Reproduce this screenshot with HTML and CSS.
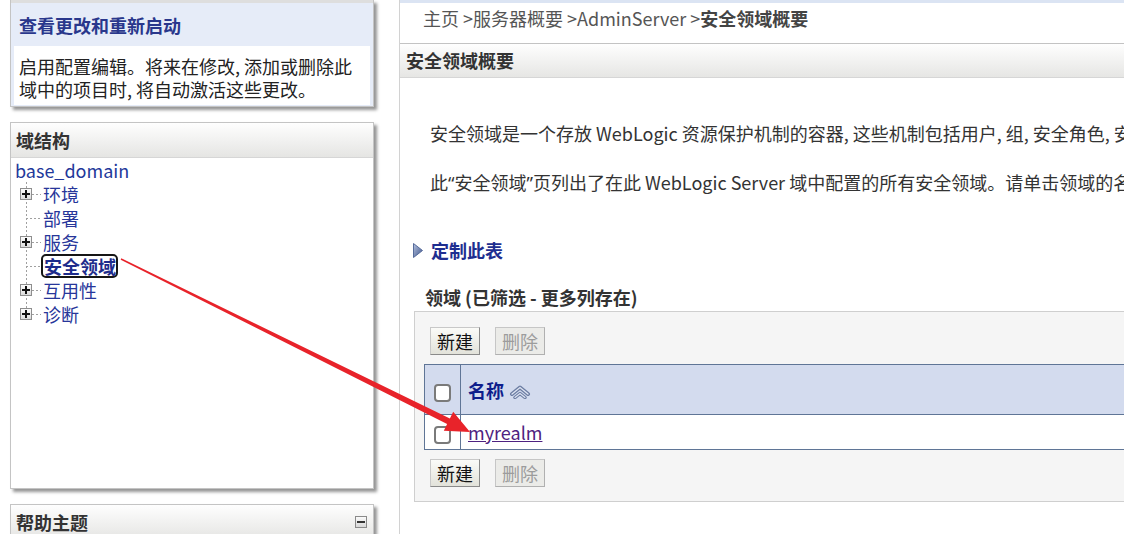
FILE: index.html
```html
<!DOCTYPE html>
<html lang="zh-CN">
<head>
<meta charset="utf-8">
<title>安全领域概要</title>
<link rel="stylesheet" href="styles.css">
</head>
<body>
<div class="page">
  <aside class="sidebar">
    <section class="panel change-center">
      <div class="cc-strip"></div>
      <h2 class="cc-title">查看更改和重新启动</h2>
      <div class="cc-body">启用配置编辑。将来在修改, 添加或删除此<br>域中的项目时, 将自动激活这些更改。</div>
    </section>

    <section class="panel domain-panel">
      <h2 class="panel-head">域结构</h2>
      <div class="tree">
        <div class="tree-root">base_domain</div>
        <ul class="tree-list">
          <li class="tree-row"><span class="gutter"><span class="toggle"></span><span class="dash"></span></span><a class="node">环境</a></li>
          <li class="tree-row"><span class="gutter"><span class="leaf-dash"></span></span><a class="node">部署</a></li>
          <li class="tree-row"><span class="gutter"><span class="toggle"></span><span class="dash"></span></span><a class="node">服务</a></li>
          <li class="tree-row"><span class="gutter"><span class="leaf-dash"></span></span><a class="node selected">安全领域</a></li>
          <li class="tree-row"><span class="gutter"><span class="toggle"></span><span class="dash"></span></span><a class="node">互用性</a></li>
          <li class="tree-row last"><span class="gutter"><span class="toggle"></span><span class="dash"></span></span><a class="node">诊断</a></li>
        </ul>
      </div>
    </section>

    <section class="panel help-panel">
      <h2 class="panel-head help-head"><span>帮助主题</span><span class="minus"></span></h2>
    </section>
  </aside>

  <main class="content">
    <div class="top-strip"></div>
    <nav class="breadcrumb">主页 &gt;服务器概要 &gt;AdminServer &gt;<b>安全领域概要</b></nav>
    <section class="main-panel">
      <h1 class="main-head">安全领域概要</h1>
      <div class="main-body">
        <p class="intro first">安全领域是一个存放 WebLogic 资源保护机制的容器, 这些机制包括用户, 组, 安全角色, 安全策略和安全提供程序。</p>
        <p class="intro">此<span class="q">“</span>安全领域<span class="q">”</span>页列出了在此 WebLogic Server 域中配置的所有安全领域。请单击领域的名称以查看和配置该领域。</p>

        <div class="customize">
          <svg class="tri" width="10" height="15" viewBox="0 0 10 15">
            <defs>
              <linearGradient id="tg" x1="0" y1="0" x2="1" y2="1">
                <stop offset="0" stop-color="#b4c2e0"/>
                <stop offset="1" stop-color="#3f5489"/>
              </linearGradient>
            </defs>
            <polygon points="0.5,0.5 9.5,7.5 0.5,14.5" fill="url(#tg)" stroke="#566b9a" stroke-width="1"/>
          </svg>
          <a class="customize-link">定制此表</a>
        </div>

        <h3 class="table-title">领域 (已筛选 - 更多列存在)</h3>

        <div class="table-box">
          <div class="btn-row">
            <button class="btn">新建</button><button class="btn" disabled>删除</button>
          </div>
          <table class="grid">
            <tr class="head-row">
              <th class="chk-cell"><span class="checkbox"></span></th>
              <th class="name-cell">名称
                <svg class="sort" width="22" height="14" viewBox="0 0 22 14">
                  <polyline points="3,9 11,2.5 19,9" fill="none" stroke="#6d7ea3" stroke-width="4" stroke-linejoin="round" stroke-linecap="round"/>
                  <polyline points="3,9 11,2.5 19,9" fill="none" stroke="#dfe5f3" stroke-width="1.3" stroke-linecap="round"/>
                  <polyline points="6,12.5 11,8.5 16,12.5" fill="none" stroke="#6d7ea3" stroke-width="3.5" stroke-linejoin="round" stroke-linecap="round"/>
                  <polyline points="6,12.5 11,8.5 16,12.5" fill="none" stroke="#dfe5f3" stroke-width="1.2" stroke-linecap="round"/>
                </svg>
              </th>
            </tr>
            <tr class="data-row">
              <td class="chk-cell"><span class="checkbox"></span></td>
              <td class="name-cell"><a class="realm-link">myrealm</a></td>
            </tr>
          </table>
          <div class="btn-row lower">
            <button class="btn">新建</button><button class="btn" disabled>删除</button>
          </div>
        </div>
      </div>
    </section>
  </main>
</div>

<svg class="annotation" width="1124" height="534" viewBox="0 0 1124 534">
  <polygon points="121.3,258.3 449.9,418.6 453.2,411.8 470,432 443.8,430.8 447.1,424.0 120.7,259.7" fill="#e8232a"/>
</svg>
</body>
</html>
```

FILE: styles.css
```css
html, body {
  margin: 0;
  padding: 0;
  overflow: hidden;
  background: #fff;
}

body {
  position: relative;
  width: 1124px;
  height: 534px;
  font-family: "Noto Sans CJK SC", "Noto Sans", sans-serif;
  font-size: 18px;
  color: #222;
}

.page {
  display: flex;
  height: 534px;
}

/* ---------- sidebar ---------- */
.sidebar {
  width: 399px;
  flex: none;
  padding-left: 10px;
  box-sizing: border-box;
}

.panel {
  width: 364px;
  box-sizing: border-box;
  background: #fff;
  border: 1px solid #c4c4c4;
  box-shadow: 3px 3px 3px rgba(0, 0, 0, 0.42);
}

.change-center {
  background: #e6ecf8;
  border-top: none;
}

.cc-strip {
  height: 3px;
  background: #dedede;
}

.cc-title {
  margin: 0;
  height: 43px;
  box-sizing: border-box;
  padding: 2px 0 0 8px;
  line-height: 40px;
  font-size: 18px;
  font-weight: bold;
  color: #29378c;
}

.cc-body {
  background: #fff;
  margin: 0 3px 1px;
  padding: 9px 6px 4px 5px;
  line-height: 23px;
  white-space: nowrap;
  color: #222;
}

.domain-panel {
  margin-top: 15px;
  height: 367px;
}

.panel-head {
  margin: 0;
  height: 35px;
  box-sizing: border-box;
  line-height: 34px;
  padding-left: 5px;
  font-size: 18px;
  font-weight: bold;
  color: #333;
  background: linear-gradient(#fefefe, #e5e5e3);
  border-bottom: 1px solid #d6d6d6;
}

.tree {
  padding: 0 0 0 4px;
}

.tree-root {
  line-height: 24px;
  color: #22389a;
}

.tree-list {
  list-style: none;
  margin: 0;
  padding: 0;
}

.tree-row {
  display: flex;
  align-items: center;
  height: 24px;
  background: linear-gradient(#a0a0a0 50%, transparent 50%) 11px 0 / 1px 4px repeat-y;
}

.tree-row.last {
  background:
    linear-gradient(#fff, #fff) 0 12px / 100% 12px no-repeat,
    linear-gradient(#a0a0a0 50%, transparent 50%) 11px 0 / 1px 4px repeat-y;
}

.gutter {
  display: flex;
  align-items: center;
  width: 28px;
  flex: none;
}

.toggle {
  width: 12px;
  height: 12px;
  margin-left: 5px;
  box-sizing: border-box;
  border: 1px solid #8e8e8e;
  background:
    linear-gradient(#111, #111) center / 8px 2px no-repeat,
    linear-gradient(#111, #111) center / 2px 8px no-repeat,
    linear-gradient(#fdfdfd, #dcdcdc);
}

.dash {
  width: 9px;
  height: 1px;
  background: linear-gradient(to right, #a0a0a0 50%, transparent 50%) 0 0 / 4px 1px repeat-x;
}

.leaf-dash {
  width: 15px;
  height: 1px;
  margin-left: 11px;
  background: linear-gradient(to right, #a0a0a0 50%, transparent 50%) 0 0 / 4px 1px repeat-x;
}

.node {
  color: #27369a;
  text-decoration: none;
  line-height: 24px;
}

.node.selected {
  font-weight: bold;
  color: #1d2c8c;
  border: 2.5px solid #161616;
  border-radius: 5px;
  line-height: 20px;
  margin-left: -2px;
  padding: 0 0 0 1px;
}

.help-panel {
  margin-top: 15px;
  height: 60px;
}

.help-head {
  display: flex;
  justify-content: space-between;
  align-items: center;
  padding-right: 6px;
}

.minus {
  width: 12px;
  height: 12px;
  box-sizing: border-box;
  border: 1px solid #8a8a8a;
  background:
    linear-gradient(#333, #333) center / 8px 2px no-repeat,
    linear-gradient(#fafafa, #d8d8d8);
}

/* ---------- content ---------- */
.content {
  flex: 1;
  min-width: 0;
  border-left: 1px solid #d2d2d2;
  white-space: nowrap;
  overflow: hidden;
}

.top-strip {
  height: 3px;
  background: #dbe4f3;
}

.breadcrumb {
  padding: 3px 0 0 23px;
  line-height: 24px;
  color: #555;
}

.breadcrumb b {
  color: #444;
}

.main-panel {
  margin-top: 13px;
}

.main-head {
  margin: 0;
  height: 35px;
  box-sizing: border-box;
  border-top: 1px solid #c3c3c3;
  border-bottom: 1px solid #d6d6d6;
  line-height: 33px;
  padding-left: 6px;
  font-size: 18px;
  font-weight: bold;
  color: #333;
  background: linear-gradient(#fefefe, #e6e6e4);
}

.main-body {
  padding-left: 13px;
}

.intro {
  margin: 25px 0 0;
  padding-left: 17px;
  line-height: 24px;
  color: #333;
}

.intro.first {
  margin-top: 43px;
}

.q {
  font-family: "Noto Sans", sans-serif;
}

.customize {
  display: flex;
  align-items: center;
  gap: 8px;
  margin-top: 43px;
  height: 24px;
}

.tri {
  display: block;
}

.customize-link {
  font-weight: bold;
  color: #1e2e90;
  line-height: 24px;
}

.table-title {
  margin: 23px 0 0;
  padding-left: 12px;
  line-height: 24px;
  font-size: 18px;
  font-weight: bold;
  color: #333;
}

.table-box {
  margin: 2px 0 0 1px;
  width: 1000px;
  box-sizing: border-box;
  border: 1px solid #cfcfcf;
  background: #f5f5f5;
  padding: 15px 0 14px 9px;
}

.btn-row {
  display: flex;
  gap: 15px;
  padding-left: 6px;
}

.btn-row.lower {
  margin-top: 9px;
}

.btn {
  width: 50px;
  height: 28px;
  padding: 0;
  font-family: inherit;
  font-size: 18px;
  line-height: 26px;
  color: #111;
  border: 1px solid;
  border-color: #c8c8c8 #8a8a8a #8a8a8a #c8c8c8;
  background: linear-gradient(#fbfbf8, #e2e2da);
}

.btn:disabled {
  color: #9c9c9c;
  border-color: #c6c6c6 #b0b0b0 #b0b0b0 #c6c6c6;
  background: #ebebe8;
}

.grid {
  margin-top: 9px;
  width: 980px;
  border-collapse: collapse;
  border: 1px solid #5f7596;
  background: #fff;
}

.head-row {
  height: 50px;
  background: #d3dbee;
}

.data-row {
  height: 35px;
}

.chk-cell {
  width: 35px;
  padding: 0;
  text-align: center;
  vertical-align: middle;
  border-right: 1px solid #5f7596;
}

.head-row th {
  border-bottom: 1px solid #5f7596;
}

.checkbox {
  display: inline-block;
  width: 17px;
  height: 18px;
  box-sizing: border-box;
  border: 2px solid #7a7a7a;
  border-radius: 4px;
  background: #fff;
  vertical-align: middle;
}

.name-cell {
  text-align: left;
  padding: 0 0 0 7px;
  vertical-align: middle;
}

th.name-cell {
  font-weight: bold;
  color: #0e1e8c;
}

.sort {
  vertical-align: -1px;
  margin-left: 1px;
}

.realm-link {
  color: #4e2180;
  text-decoration: underline;
}

/* ---------- annotation overlay ---------- */
.annotation {
  position: absolute;
  left: 0;
  top: 0;
  pointer-events: none;
}
```
